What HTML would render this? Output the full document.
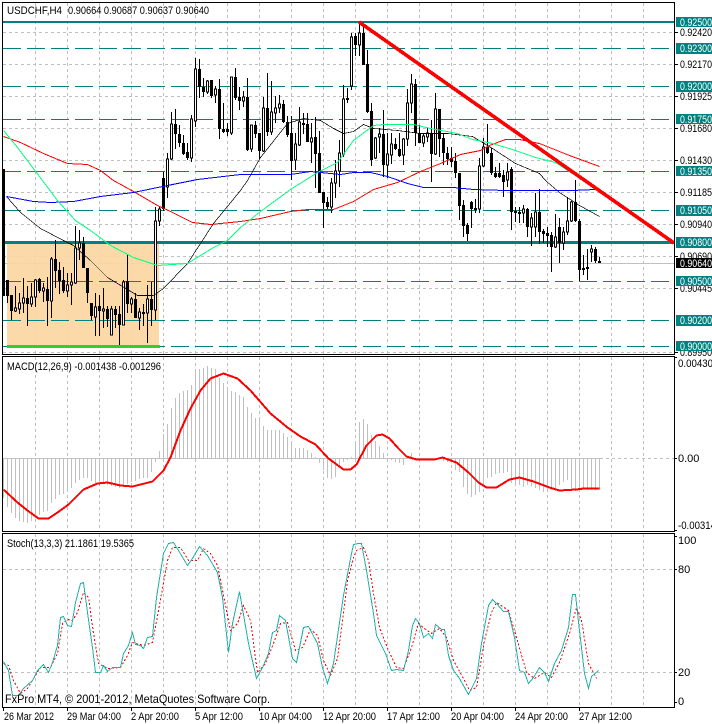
<!DOCTYPE html>
<html><head><meta charset="utf-8"><style>
html,body{margin:0;padding:0;background:#fff;width:712px;height:724px;overflow:hidden}
svg{display:block}
text{font-family:"Liberation Sans",sans-serif;font-size:11px;fill:#000}
polyline{transform:translate(.5px,.5px)}
</style></head><body>
<svg width="712" height="724" viewBox="0 0 712 724" shape-rendering="crispEdges" fill="none">
<!-- grid -->
<path stroke="#c0c0c0" stroke-dasharray="3 3" d="M35.5 3V354M67.5 3V354M99.5 3V354M131.5 3V354M163.5 3V354M195.5 3V354M227.5 3V354M259.5 3V354M291.5 3V354M323.5 3V354M355.5 3V354M387.5 3V354M419.5 3V354M451.5 3V354M483.5 3V354M515.5 3V354M547.5 3V354M579.5 3V354M611.5 3V354M643.5 3V354"/>
<path stroke="#c0c0c0" stroke-dasharray="3 3" d="M3 32.5H674M3 64.5H674M3 96.5H674M3 128.5H674M3 160.5H674M3 192.5H674M3 224.5H674M3 256.5H674M3 288.5H674M3 352.5H674"/>
<path stroke="#c0c0c0" d="M3 263.5H674"/>
<rect x="7" y="244" width="152" height="102" fill="#fbd6a2" fill-opacity=".93"/>
<!-- levels -->
<path stroke="#008080" stroke-width="2" d="M3 22H674"/>
<path stroke="#008080" stroke-width="3" d="M3 242.5H674"/>
<path stroke="#008080" stroke-dasharray="18 6" d="M3 48.5H674M3 86.5H674M3 119.5H674M3 171.5H674M3 210.5H674M3 281.5H674M3 320.5H674M3 346.5H674"/>
<!-- wicks -->
<path stroke="#000" d="M7.5 280V303M11.5 295V320M15.5 286V312M19.5 293V314M23.5 278V313M27.5 286V326M31.5 283V307M35.5 279V307M39.5 278V293M43.5 283V302M47.5 277V326M51.5 257V318M55.5 240V288M59.5 262V294M63.5 267V293M67.5 273V297M71.5 273V305M75.5 226V284M79.5 230V260M83.5 237V268M87.5 268V303M91.5 303V320M95.5 293V336M99.5 295V336M103.5 288V328M107.5 306V327M111.5 306V335M115.5 306V328M119.5 306V345M123.5 280V325M127.5 254V313M131.5 297V313M135.5 293V318M139.5 308V330M143.5 304V326M147.5 285V343M151.5 282V326M155.5 207V320M159.5 207V226M163.5 172V211M167.5 153V198M171.5 112V160M175.5 109V149M179.5 125V147M183.5 135V155M187.5 143V160M191.5 115V162M195.5 58V127M199.5 59V98M203.5 78V97M207.5 80V94M211.5 80V98M215.5 86V103M219.5 79V139M223.5 103V133M227.5 123V136M231.5 77V135M235.5 68V100M239.5 87V110M243.5 91V107M247.5 78V151M251.5 125V152M255.5 121V138M259.5 133V159M263.5 97V152M267.5 73V136M271.5 81V135M275.5 96V123M279.5 95V113M283.5 100V123M287.5 116V137M291.5 116V180M295.5 133V170M299.5 107V146M303.5 113V134M307.5 113V142M311.5 123V163M315.5 117V188M319.5 131V193M323.5 192V228M327.5 197V210M331.5 178V213M335.5 160V198M339.5 140V187M343.5 85V157M347.5 88V103M351.5 33V90M355.5 33V56M359.5 21V56M363.5 27V65M367.5 50V113M371.5 103V166M375.5 137V159M379.5 128V153M383.5 110V177M387.5 133V178M391.5 133V164M395.5 138V150M399.5 133V157M403.5 138V165M407.5 89V146M411.5 74V113M415.5 79V146M419.5 125V143M423.5 133V147M427.5 128V142M431.5 120V182M435.5 93V155M439.5 109V157M443.5 133V165M447.5 147V165M451.5 147V167M455.5 153V178M459.5 173V220M463.5 200V237M467.5 223V241M471.5 201V228M475.5 199V213M479.5 158V213M483.5 138V167M487.5 124V154M491.5 148V175M495.5 167V178M499.5 163V178M503.5 170V197M507.5 163V187M511.5 167V230M515.5 207V222M519.5 207V223M523.5 205V223M527.5 208V237M531.5 213V246M535.5 193V237M539.5 189V244M543.5 229V243M547.5 227V247M551.5 232V272M555.5 214V248M559.5 218V263M563.5 227V250M567.5 197V235M571.5 201V222M575.5 180V222M579.5 219V281M583.5 255V275M587.5 249V280M591.5 245V262M595.5 247V263M599.5 257V263"/>
<!-- black bodies -->
<path stroke="#000" stroke-width="3" d="M7.5 280V296M11.5 295V311M27.5 298V304M39.5 279V291M47.5 289V301M55.5 259V271M59.5 270V281M63.5 280V291M83.5 243V268M87.5 268V293M91.5 303V316M99.5 306V311M107.5 309V319M115.5 309V315M119.5 314V325M127.5 281V304M135.5 299V318M143.5 312V314M151.5 299V310M163.5 178V209M175.5 124V134M179.5 134V143M183.5 143V154M187.5 152V158M199.5 69V87M203.5 87V92M211.5 80V96M219.5 89V129M223.5 129V132M227.5 129V132M235.5 77V98M239.5 97V101M247.5 97V150M255.5 125V134M259.5 133V151M267.5 108V132M283.5 104V122M287.5 122V135M291.5 133V161M303.5 123V125M307.5 124V142M315.5 137V154M319.5 153V193M323.5 192V203M327.5 202V207M347.5 98V100M355.5 36V45M363.5 33V65M367.5 64V112M371.5 111V160M383.5 134V165M395.5 144V149M399.5 149V156M415.5 84V133M419.5 133V143M431.5 133V154M439.5 109V139M443.5 138V153M447.5 153V159M451.5 158V162M455.5 161V173M459.5 173V206M463.5 205V226M467.5 225V234M471.5 202V209M475.5 208V210M487.5 147V153M491.5 153V173M495.5 173V177M499.5 173V177M503.5 175V182M511.5 169V212M515.5 211V213M519.5 212V214M527.5 209V227M539.5 212V232M543.5 231V234M547.5 233V236M551.5 235V247M559.5 227V243M575.5 202V221M579.5 221V270M583.5 268V270M587.5 267V269M595.5 249V261M599.5 261V263"/>
<path fill="#000" d="M3 169h2v127h-2z"/>
<!-- white bodies -->
<path fill="#fff" stroke="#000" d="M14.5 308h2v3h-2zM18.5 303h2v6h-2zM22.5 298h2v5h-2zM30.5 297h2v7h-2zM34.5 280h2v17h-2zM42.5 288h2v3h-2zM50.5 259h2v42h-2zM66.5 285h2v6h-2zM70.5 282h2v3h-2zM74.5 248h2v35h-2zM78.5 243h2v5h-2zM94.5 307h2v10h-2zM102.5 309h2v2h-2zM110.5 309h2v26h-2zM122.5 282h2v43h-2zM130.5 299h2v5h-2zM138.5 312h2v6h-2zM146.5 299h2v14h-2zM154.5 221h2v89h-2zM158.5 209h2v12h-2zM166.5 159h2v28h-2zM170.5 124h2v35h-2zM190.5 119h2v39h-2zM194.5 69h2v52h-2zM206.5 81h2v11h-2zM214.5 89h2v6h-2zM230.5 77h2v56h-2zM242.5 97h2v4h-2zM250.5 125h2v24h-2zM262.5 108h2v43h-2zM270.5 112h2v20h-2zM274.5 108h2v5h-2zM278.5 104h2v4h-2zM294.5 144h2v16h-2zM298.5 122h2v23h-2zM310.5 138h2v4h-2zM330.5 183h2v24h-2zM334.5 171h2v12h-2zM338.5 153h2v18h-2zM342.5 99h2v55h-2zM350.5 37h2v49h-2zM358.5 33h2v12h-2zM374.5 138h2v20h-2zM378.5 134h2v3h-2zM386.5 154h2v11h-2zM390.5 144h2v11h-2zM402.5 139h2v16h-2zM406.5 103h2v36h-2zM410.5 84h2v19h-2zM422.5 136h2v7h-2zM426.5 133h2v4h-2zM434.5 109h2v45h-2zM478.5 166h2v43h-2zM482.5 147h2v19h-2zM506.5 172h2v8h-2zM522.5 209h2v4h-2zM530.5 218h2v9h-2zM534.5 212h2v15h-2zM554.5 237h2v10h-2zM562.5 232h2v11h-2zM566.5 221h2v11h-2zM570.5 202h2v19h-2zM590.5 249h2v3h-2z"/>
<!-- MAs -->
<polyline stroke="#ff0000" points="3,136 20,142 43,153 67,163 87,164 100,170 113,180 133,191 157,205 170,211 192,222 210,224 240,221 260,218 290,211 307,209 333,209 353,201 373,189 397,182 420,171 440,163 460,154 480,150 489,145 505,139 519,139 539,143 569,155 599,166"/>
<polyline stroke="#0000ff" points="6,196 33,201 50,202 73,201 100,196 133,192 167,185 197,179 240,174 290,174 310,171 340,174 353,172 370,172 387,176 407,183 423,187 453,187 473,189 505,190 547,190 572,190 595,189"/>
<polyline stroke="#000" stroke-width=".7" points="6,196 20,212 40,228 63,240 73,245 90,260 107,277 122,286 137,295 153,295 163,288 187,263 213,223 240,190 247,180 260,157 287,123 303,118 320,120 333,128 343,133 353,131 363,124 373,128 397,130 420,133 447,133 472,136 492,148 515,163 539,173 545,180 559,192 579,205 599,216"/>
<polyline stroke="#00ff7f" points="3,130 17,147 42,180 57,200 75,220 90,230 110,245 133,257 157,265 187,263 213,247 227,240 240,227 260,211 290,189 317,172 337,162 353,140 373,125 383,124 413,124 430,128 457,133 472,139 492,143 515,150 535,157 555,162 587,183"/>
<!-- objects -->
<path stroke="#32cd32" stroke-width="3" d="M7 346.5H160"/>
<path stroke="#ff0000" stroke-width="3.6" d="M359 22L674 243"/>
<!-- MACD histogram -->
<path stroke="#c0c0c0" d="M3.5 458V498M7.5 458V507M11.5 458V513M15.5 458V518M19.5 458V521M23.5 458V522M27.5 458V523M31.5 458V521M35.5 458V518M39.5 458V515M43.5 458V512M47.5 458V511M51.5 458V503M55.5 458V499M59.5 458V495M63.5 458V494M67.5 458V490M71.5 458V488M75.5 458V483M79.5 458V480M83.5 458V478M87.5 458V478M91.5 458V481M95.5 458V483M99.5 458V484M103.5 458V483M107.5 458V485M111.5 458V486M115.5 458V487M119.5 458V488M123.5 458V487M127.5 458V484M131.5 458V482M135.5 458V481M139.5 458V479M143.5 458V478M147.5 458V478M151.5 458V472M155.5 458V462M159.5 458V451M163.5 458V434M167.5 458V424M171.5 458V408M175.5 458V398M179.5 458V393M183.5 458V391M187.5 458V390M191.5 458V385M195.5 458V370M199.5 458V369M203.5 458V368M207.5 458V366M211.5 458V368M215.5 458V369M219.5 458V378M223.5 458V383M227.5 458V388M231.5 458V391M235.5 458V392M239.5 458V395M243.5 458V397M247.5 458V407M251.5 458V413M255.5 458V418M259.5 458V418M263.5 458V426M267.5 458V430M271.5 458V430M275.5 458V430M279.5 458V430M283.5 458V433M287.5 458V437M291.5 458V442M295.5 458V448M299.5 458V448M303.5 458V448M307.5 458V450M311.5 458V453M315.5 458V457M319.5 458V463M323.5 458V470M327.5 458V478M331.5 458V479M335.5 458V477M339.5 458V467M343.5 458V462M347.5 458V460M351.5 458V457M355.5 458V442M359.5 458V422M363.5 458V419M367.5 458V424M371.5 458V435M375.5 458V441M379.5 458V446M383.5 458V453M387.5 458V460M391.5 458V460M395.5 458V462M399.5 458V463M403.5 458V465M407.5 458V457M411.5 458V453M443.5 458V461M447.5 458V462M451.5 458V463M455.5 458V470M459.5 458V472M463.5 458V487M467.5 458V494M471.5 458V497M475.5 458V495M479.5 458V492M483.5 458V487M487.5 458V478M491.5 458V477M495.5 458V474M499.5 458V473M503.5 458V473M507.5 458V472M511.5 458V483M515.5 458V483M519.5 458V485M523.5 458V487M527.5 458V485M531.5 458V486M535.5 458V488M539.5 458V490M543.5 458V492M547.5 458V490M551.5 458V490M555.5 458V488M559.5 458V485M563.5 458V482M567.5 458V480M571.5 458V490M575.5 458V491M579.5 458V489M583.5 458V488M587.5 458V490M591.5 458V490M595.5 458V490M599.5 458V490"/>
<path stroke="#c0c0c0" d="M3 458.5H600"/>
<path stroke="#c0c0c0" stroke-dasharray="3 3" d="M600 458.5H674M35.5 357V531M67.5 357V531M99.5 357V531M131.5 357V531M163.5 357V531M195.5 357V531M227.5 357V531M259.5 357V531M291.5 357V531M323.5 357V531M355.5 357V531M387.5 357V531M419.5 357V531M451.5 357V531M483.5 357V531M515.5 357V531M547.5 357V531M579.5 357V531M611.5 357V531M643.5 357V531"/>
<polyline stroke="#ff0000" stroke-width="2" points="3,489 17,502 27,510 38,518 48,518 57,512 68,504 83,489 97,483 107,482 120,485 132,486 152,481 163,470 170,457 180,430 190,408 200,390 210,378 223,373 237,378 250,390 270,413 287,427 300,436 315,444 328,458 343,469 350,469 356,464 366,445 376,435 382,434 389,438 398,448 406,456 416,459 434,459 442,457 456,462 468,472 478,482 486,487 496,487 509,479 519,477 533,481 549,487 559,490 576,489 583,488 599,488"/>
<!-- Stoch -->
<path stroke="#c0c0c0" stroke-dasharray="3 3" d="M3 569.5H674M3 672.5H674M35.5 534V707M67.5 534V707M99.5 534V707M131.5 534V707M163.5 534V707M195.5 534V707M227.5 534V707M259.5 534V707M291.5 534V707M323.5 534V707M355.5 534V707M387.5 534V707M419.5 534V707M451.5 534V707M483.5 534V707M515.5 534V707M547.5 534V707M579.5 534V707M611.5 534V707M643.5 534V707"/>
<polyline stroke="#ff0000" stroke-dasharray="2 2" points="3,663 8,665 13,680 20,693 27,688 33,678 40,667 50,667 57,653 62,623 67,619 72,620 77,612 83,592 88,597 93,633 98,663 107,668 120,667 127,655 132,642 143,645 152,642 158,610 167,560 172,547 180,547 188,560 197,560 203,548 210,553 217,565 222,590 230,630 237,623 243,605 250,620 257,672 265,663 273,643 280,623 287,622 295,650 302,647 310,629 317,635 323,660 330,675 337,658 347,580 353,557 356,550 363,547 368,560 373,593 379,627 388,650 396,667 403,668 411,647 418,623 424,628 431,633 439,628 446,637 453,660 463,678 469,690 476,687 484,640 491,612 496,602 508,610 516,637 526,672 534,678 544,672 551,677 559,662 569,633 576,607 581,620 588,663 596,678"/>
<polyline stroke="#20b2aa" points="3,661 8,670 12,695 18,695 23,688 32,680 37,670 43,664 48,672 52,662 57,645 60,617 63,616 67,625 71,626 75,602 80,583 83,582 87,612 92,647 95,672 100,672 103,665 107,671 112,667 120,667 123,653 128,645 132,632 135,644 140,645 143,648 147,637 152,636 156,597 163,553 168,543 173,542 178,550 187,565 192,558 199,546 207,555 217,572 222,597 228,652 232,623 239,591 248,643 256,678 262,667 268,653 272,632 276,630 279,615 285,620 292,658 296,662 303,627 308,626 317,643 322,667 327,683 333,663 343,595 351,553 353,544 358,543 361,543 366,570 373,613 376,635 385,653 391,670 396,669 403,670 408,650 412,625 415,618 419,623 423,637 428,633 432,638 435,624 441,629 444,629 448,655 453,670 459,678 468,694 476,678 481,643 488,605 492,599 496,603 503,611 508,611 514,637 519,670 524,672 528,683 533,677 539,667 544,672 548,681 554,663 561,650 568,627 572,594 575,594 579,630 584,673 588,688 591,676 598,670"/>
<!-- frames -->
<path stroke="#000" d="M2.5 2.5H674.5V354.5H2.5ZM2.5 356.5H674.5V531.5H2.5ZM2.5 533.5H674.5V707.5H2.5Z"/>
<path stroke="#000" d="M674 32.5h4M674 64.5h4M674 96.5h4M674 128.5h4M674 160.5h4M674 192.5h4M674 224.5h4M674 256.5h4M674 288.5h4M674 352.5h4M674 357.5h3M674 458.5h3M674 530.5h3M674 536.5h3M674 569.5h3M674 672.5h3M674 702.5h3M3.5 707v4M67.5 707v4M131.5 707v4M195.5 707v4M259.5 707v4M323.5 707v4M387.5 707v4M451.5 707v4M515.5 707v4M579.5 707v4"/>
<!-- text -->
<text x="7" y="14" textLength="55" lengthAdjust="spacingAndGlyphs">USDCHF,H4</text>
<text x="68" y="14" textLength="141" lengthAdjust="spacingAndGlyphs">0.90664 0.90687 0.90637 0.90640</text>
<text x="7" y="370" textLength="154" lengthAdjust="spacingAndGlyphs">MACD(12,26,9) -0.001438 -0.001296</text>
<text x="7" y="547" textLength="127" lengthAdjust="spacingAndGlyphs">Stoch(13,3,3) 21.1861 19.5365</text>
<text x="5" y="703" textLength="265" lengthAdjust="spacingAndGlyphs" style="font-size:12px">FxPro MT4, © 2001-2012, MetaQuotes Software Corp.</text>
<g>
<text x="680" y="36" textLength="32" lengthAdjust="spacingAndGlyphs">0.92420</text>
<text x="680" y="68" textLength="32" lengthAdjust="spacingAndGlyphs">0.92170</text>
<text x="680" y="100" textLength="32" lengthAdjust="spacingAndGlyphs">0.91925</text>
<text x="680" y="132" textLength="32" lengthAdjust="spacingAndGlyphs">0.91680</text>
<text x="680" y="164" textLength="32" lengthAdjust="spacingAndGlyphs">0.91430</text>
<text x="680" y="196" textLength="32" lengthAdjust="spacingAndGlyphs">0.91185</text>
<text x="680" y="228" textLength="32" lengthAdjust="spacingAndGlyphs">0.90940</text>
<text x="680" y="260" textLength="32" lengthAdjust="spacingAndGlyphs">0.90690</text>
<text x="680" y="292" textLength="32" lengthAdjust="spacingAndGlyphs">0.90445</text>
<text x="680" y="356" textLength="32" lengthAdjust="spacingAndGlyphs">0.89950</text>
</g>
<path fill="#008080" d="M676 17h36v10h-36zM676 43h36v11h-36zM676 81h36v11h-36zM676 114h36v10h-36zM676 166h36v10h-36zM676 205h36v11h-36zM676 237h36v11h-36zM676 276h36v10h-36zM676 315h36v11h-36zM676 341h36v10h-36z"/>
<rect x="676" y="258" width="36" height="10" fill="#000"/>
<g>
<text x="680" y="26" style="fill:#fff" textLength="32" lengthAdjust="spacingAndGlyphs">0.92500</text>
<text x="680" y="52" style="fill:#fff" textLength="32" lengthAdjust="spacingAndGlyphs">0.92300</text>
<text x="680" y="90" style="fill:#fff" textLength="32" lengthAdjust="spacingAndGlyphs">0.92000</text>
<text x="680" y="123" style="fill:#fff" textLength="32" lengthAdjust="spacingAndGlyphs">0.91750</text>
<text x="680" y="175" style="fill:#fff" textLength="32" lengthAdjust="spacingAndGlyphs">0.91350</text>
<text x="680" y="214" style="fill:#fff" textLength="32" lengthAdjust="spacingAndGlyphs">0.91050</text>
<text x="680" y="246" style="fill:#fff" textLength="32" lengthAdjust="spacingAndGlyphs">0.90800</text>
<text x="680" y="267" style="fill:#fff" textLength="32" lengthAdjust="spacingAndGlyphs">0.90640</text>
<text x="680" y="285" style="fill:#fff" textLength="32" lengthAdjust="spacingAndGlyphs">0.90500</text>
<text x="680" y="324" style="fill:#fff" textLength="32" lengthAdjust="spacingAndGlyphs">0.90200</text>
<text x="680" y="350" style="fill:#fff" textLength="32" lengthAdjust="spacingAndGlyphs">0.90000</text>
</g>
<text x="678" y="367" textLength="35" lengthAdjust="spacingAndGlyphs">0.00430</text>
<text x="678" y="462">0.00</text>
<text x="678" y="529" textLength="38" lengthAdjust="spacingAndGlyphs">-0.00314</text>
<text x="678" y="544">100</text>
<text x="678" y="573">80</text>
<text x="678" y="676">20</text>
<text x="678" y="705">0</text>
<text x="4" y="720" textLength="50" lengthAdjust="spacingAndGlyphs">26 Mar 2012</text>
<text x="67" y="720" textLength="54" lengthAdjust="spacingAndGlyphs">29 Mar 04:00</text>
<text x="131" y="720" textLength="48" lengthAdjust="spacingAndGlyphs">2 Apr 20:00</text>
<text x="195" y="720" textLength="48" lengthAdjust="spacingAndGlyphs">5 Apr 12:00</text>
<text x="259" y="720" textLength="53" lengthAdjust="spacingAndGlyphs">10 Apr 04:00</text>
<text x="323" y="720" textLength="53" lengthAdjust="spacingAndGlyphs">12 Apr 20:00</text>
<text x="387" y="720" textLength="53" lengthAdjust="spacingAndGlyphs">17 Apr 12:00</text>
<text x="451" y="720" textLength="53" lengthAdjust="spacingAndGlyphs">20 Apr 04:00</text>
<text x="515" y="720" textLength="53" lengthAdjust="spacingAndGlyphs">24 Apr 20:00</text>
<text x="579" y="720" textLength="53" lengthAdjust="spacingAndGlyphs">27 Apr 12:00</text>
</svg>
</body></html>
